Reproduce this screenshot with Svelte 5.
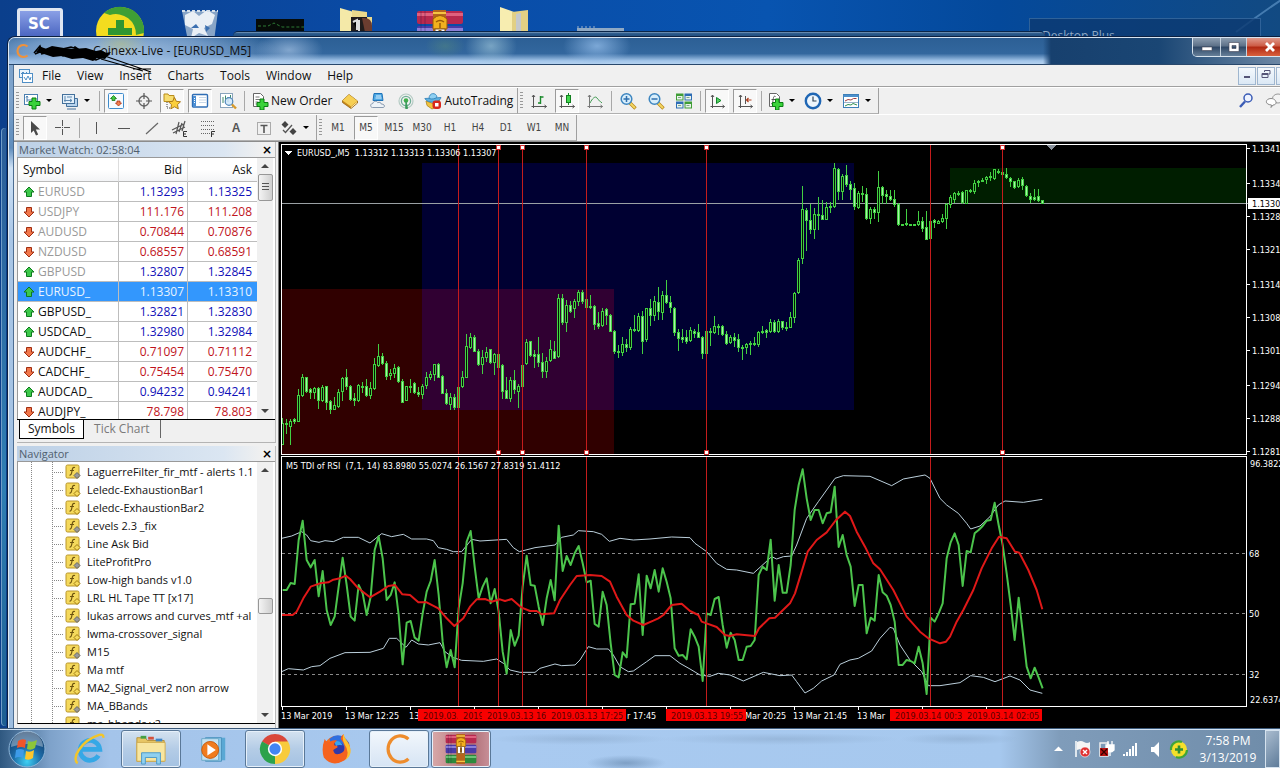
<script lang="ts">
  type Quote = { symbol: string; bid: string; ask: string; up: boolean; dim?: boolean; selected?: boolean };

  const menus = ["File", "View", "Insert", "Charts", "Tools", "Window", "Help"];
  const timeframes = ["M1", "M5", "M15", "M30", "H1", "H4", "D1", "W1", "MN"];

  const quotes: Quote[] = [
    { symbol: "EURUSD", bid: "1.13293", ask: "1.13325", up: true, dim: true },
    { symbol: "USDJPY", bid: "111.176", ask: "111.208", up: false, dim: true },
    { symbol: "AUDUSD", bid: "0.70844", ask: "0.70876", up: false, dim: true },
    { symbol: "NZDUSD", bid: "0.68557", ask: "0.68591", up: false, dim: true },
    { symbol: "GBPUSD", bid: "1.32807", ask: "1.32845", up: true, dim: true },
    { symbol: "EURUSD_", bid: "1.13307", ask: "1.13310", up: true, selected: true },
    { symbol: "GBPUSD_", bid: "1.32821", ask: "1.32830", up: true },
    { symbol: "USDCAD_", bid: "1.32980", ask: "1.32984", up: true },
    { symbol: "AUDCHF_", bid: "0.71097", ask: "0.71112", up: false },
    { symbol: "CADCHF_", bid: "0.75454", ask: "0.75470", up: false },
    { symbol: "AUDCAD_", bid: "0.94232", ask: "0.94241", up: true },
    { symbol: "AUDJPY_", bid: "78.798", ask: "78.803", up: false },
  ];

  // locked = compiled only, grey diamond
  const indicators = [
    { name: "LaguerreFilter_fir_mtf - alerts 1.1", locked: true },
    { name: "Leledc-ExhaustionBar1", locked: false },
    { name: "Leledc-ExhaustionBar2", locked: false },
    { name: "Levels 2.3 _fix", locked: true },
    { name: "Line Ask Bid", locked: false },
    { name: "LiteProfitPro", locked: true },
    { name: "Low-high bands v1.0", locked: false },
    { name: "LRL HL Tape TT [x17]", locked: false },
    { name: "lukas arrows and curves_mtf +al", locked: true },
    { name: "lwma-crossover_signal", locked: false },
    { name: "M15", locked: true },
    { name: "Ma mtf", locked: false },
    { name: "MA2_Signal_ver2 non arrow", locked: false },
    { name: "MA_BBands", locked: true },
    { name: "ma_bbands v2", locked: false },
  ];

  // high, body top, body bottom, low, 1 = bullish
  const candles = [
    [418,423,444,444,1],[419,423,424,433,1],[419,421,426,444,1],[418,419,421,423,0],[389,395,421,421,1],[374,377,395,396,1],
    [377,377,391,392,0],[388,389,392,398,0],[387,388,392,398,1],[387,388,400,408,0],[385,387,400,401,1],[386,386,402,409,0],
    [400,401,409,413,0],[397,405,409,409,1],[389,392,406,407,1],[377,378,391,400,1],[369,377,386,389,0],[385,386,399,400,0],
    [393,398,400,405,0],[384,385,400,401,1],[382,386,387,392,0],[379,386,395,396,0],[382,388,395,398,1],[358,364,388,389,1],
    [344,356,365,366,1],[353,356,363,364,0],[361,363,376,379,0],[369,373,375,379,1],[364,368,373,377,1],[366,367,381,382,0],
    [379,381,402,402,0],[386,386,400,400,1],[379,386,387,392,0],[382,383,392,393,0],[387,392,394,396,0],[384,386,394,398,1],
    [372,377,385,388,1],[371,374,377,379,1],[364,364,374,380,1],[363,364,377,377,0],[375,376,393,393,0],[389,393,403,404,0],
    [393,397,404,409,1],[394,397,407,409,0],[386,387,407,407,1],[371,377,386,387,1],[334,346,377,377,1],[333,337,347,348,1],
    [335,337,351,351,0],[349,351,364,365,0],[350,357,364,373,1],[347,352,357,361,1],[349,349,362,363,0],[353,354,362,374,1],
    [353,354,367,368,0],[364,365,391,398,0],[377,390,398,398,0],[377,380,398,401,1],[370,380,389,393,0],[384,386,391,407,1],
    [364,365,386,387,1],[339,342,363,364,1],[341,341,355,356,0],[350,354,356,367,0],[337,354,362,366,0],[353,362,371,377,0],
    [357,361,371,377,1],[340,349,360,361,1],[341,351,358,358,0],[294,298,356,357,1],[294,298,322,324,0],[300,305,322,331,1],
    [301,305,311,312,0],[299,301,308,317,1],[290,292,301,305,1],[290,292,301,303,0],[299,299,307,308,0],[295,306,307,308,0],
    [305,306,324,329,0],[312,323,326,328,0],[308,311,325,326,1],[308,309,315,324,0],[314,315,331,331,0],[330,331,351,353,0],
    [345,351,352,357,0],[337,344,352,355,1],[339,344,347,351,0],[327,329,347,349,1],[315,329,330,331,0],[313,316,330,331,1],
    [311,316,341,353,0],[308,308,339,341,1],[299,308,315,325,0],[296,301,315,320,1],[287,302,311,319,0],[291,295,312,319,1],
    [280,295,302,303,0],[296,302,307,312,0],[307,308,332,335,0],[329,332,338,350,0],[329,337,339,342,0],[330,337,341,343,0],
    [327,330,340,341,1],[329,331,333,337,0],[324,332,337,337,0],[336,337,353,358,0],[331,331,353,354,1],[328,331,332,345,0],
    [316,326,332,333,1],[324,326,327,334,0],[325,326,334,335,0],[331,334,343,344,0],[335,337,342,343,1],[333,337,340,346,0],
    [334,339,347,351,0],[345,347,348,359,0],[343,344,347,353,1],[341,343,344,354,0],[337,343,344,345,0],[331,332,344,346,1],
    [326,331,332,333,1],[329,330,332,337,0],[319,322,331,332,1],[320,322,331,332,0],[319,321,331,332,1],[321,321,327,329,0],
    [322,327,328,330,0],[312,317,327,327,1],[292,293,317,322,1],[258,260,292,293,1],[186,209,258,263,1],[208,210,220,250,0],
    [204,220,229,233,0],[208,214,229,238,1],[197,214,215,229,0],[200,215,219,219,0],[202,207,219,219,1],[202,206,207,212,0],
    [163,168,206,207,1],[168,169,191,199,0],[174,176,191,199,1],[165,175,184,186,0],[181,184,189,199,0],[183,188,206,209,0],
    [191,193,207,208,1],[186,193,194,201,0],[188,194,218,219,0],[207,209,218,223,1],[207,209,212,218,0],[171,187,212,221,1],
    [186,187,195,203,0],[190,194,196,203,0],[190,196,199,200,0],[190,199,204,206,0],[203,204,224,225,0],[224,224,225,225,0],
    [209,223,224,225,0],[224,224,225,225,0],[224,224,225,225,0],[211,221,224,225,1],[217,221,228,231,0],[211,227,239,239,0],
    [221,221,238,238,1],[219,220,222,227,0],[220,221,223,223,1],[214,218,221,222,1],[203,204,218,228,1],[195,197,204,207,1],
    [192,193,199,202,1],[191,193,194,195,0],[191,192,202,203,0],[190,190,203,203,1],[189,190,191,192,0],[180,183,191,193,1],
    [180,181,182,186,0],[178,180,181,181,0],[176,177,179,183,1],[172,176,177,180,0],[169,169,178,179,1],[169,171,172,173,0],
    [172,172,174,175,0],[168,174,177,178,0],[177,178,181,186,0],[181,181,187,188,0],[178,180,186,187,1],[177,179,185,189,0],
    [185,186,195,196,0],[193,196,199,202,0],[189,197,199,200,0],[189,196,200,201,0],[200,200,203,203,0],
  ];

  // indicator pane runs on its own grid, three units to the pixel
  const rsi = [
    405,405,384,387,255,197,315,337,315,424,348,465,510,485,395,308,390,485,497,390,415,480,425,285,244,310,435,420,382,480,
    628,503,498,548,557,475,410,378,315,420,560,637,585,637,460,385,260,228,335,430,395,370,445,402,470,590,656,525,572,542,
    395,302,390,392,455,510,430,375,436,212,348,303,330,295,273,325,382,377,507,515,410,450,565,660,667,592,607,448,446,358,
    540,362,400,345,410,340,380,430,580,602,600,613,523,545,575,678,475,480,432,426,510,578,533,555,615,615,575,573,555,360,
    335,345,254,437,330,413,413,330,165,90,43,130,195,165,165,205,175,172,95,276,240,300,335,453,390,390,535,488,497,360,
    412,422,450,500,630,630,615,618,625,575,625,717,488,500,475,445,310,262,235,270,393,288,292,235,225,213,197,195,143,210,
    270,355,450,555,428,530,635,670,638,668,700,
  ];
  const rsiPoints = rsi.map((y, i) => `${8 + i * 12},${y}`).join(" ");
  const signal =
    "5,480 38,480 50,470 70,430 92,395 120,385 145,382 160,374 180,370 197,362 210,372 235,400 270,427 300,410 325,393 345,390 367,418 390,420 415,442 440,442 475,460 500,490 523,513 550,490 570,455 590,433 615,432 635,440 660,433 675,438 695,432 725,458 750,468 770,468 785,478 822,475 840,435 870,390 890,363 930,360 965,363 990,380 1010,425 1040,480 1060,497 1090,510 1120,497 1135,490 1150,480 1175,450 1205,446 1230,468 1255,480 1265,500 1310,516 1335,540 1350,543 1370,538 1425,543 1437,520 1468,490 1485,488 1530,445 1545,415 1565,350 1583,290 1610,255 1640,232 1668,195 1695,170 1710,183 1730,230 1755,275 1780,325 1800,343 1840,405 1880,485 1920,530 1945,550 1980,565 1998,560 2010,545 2030,500 2050,465 2080,405 2105,340 2135,280 2157,245 2180,250 2205,290 2218,293 2245,345 2270,405 2287,463";
  const upper =
    "5,250 35,243 65,230 80,240 92,257 117,262 135,257 160,260 190,247 235,247 270,264 305,236 335,245 370,238 395,252 440,252 460,257 475,278 500,283 520,290 545,290 575,253 600,258 680,253 700,278 718,290 765,278 825,270 845,247 880,240 895,227 940,230 965,238 988,259 1020,250 1060,255 1110,252 1175,246 1230,248 1245,265 1280,290 1310,325 1340,343 1370,345 1420,355 1440,337 1475,305 1490,312 1510,305 1535,303 1550,270 1580,190 1615,140 1640,105 1665,70 1690,62 1770,64 1835,92 1870,72 1935,60 1950,70 1965,100 1980,130 2000,150 2035,175 2060,205 2072,222 2100,213 2130,185 2155,150 2175,138 2230,142 2287,133";
  const lower =
    "5,650 25,641 70,645 95,635 120,632 150,610 195,593 270,592 310,580 328,550 350,550 378,577 395,555 415,567 445,570 480,563 495,590 520,608 545,616 610,619 650,612 670,625 690,645 720,652 765,652 780,640 825,627 845,632 885,630 900,615 925,575 950,582 985,582 1000,600 1020,635 1045,650 1060,648 1100,620 1125,602 1170,602 1200,625 1230,642 1260,660 1290,664 1315,655 1350,660 1390,678 1450,652 1500,662 1535,660 1550,680 1575,714 1600,700 1625,678 1662,660 1680,628 1710,615 1735,610 1775,588 1800,550 1830,517 1840,520 1860,570 1890,615 1925,650 1945,692 1980,692 2040,683 2072,662 2110,667 2145,680 2190,663 2220,675 2250,705 2287,715";

  const prices: [number, string][] = [
    [148, "1.1341"], [183, "1.1334"], [216, "1.1328"], [249, "1.1321"], [284, "1.1314"],
    [317, "1.1308"], [350, "1.1301"], [385, "1.1294"], [418, "1.1288"], [451, "1.1281"],
  ];
  const levels: [number, string][] = [[553, "68"], [613, "50"], [674, "32"]];
  // labels next to a red stamp keep only the part that stays free
  const times: [number, string][] = [
    [281, "13 Mar 2019"], [345, "13 Mar 12:25"], [409, "13"], [627, "r 17:45"],
    [745, "Mar 20:25"], [793, "13 Mar 21:45"], [857, "13 Mar"],
  ];
  const ticks = Array.from({ length: 12 }, (_, i) => 282 + i * 64);
  const marks = [
    { x: 458, label: "2019.03.", grip: false },
    { x: 498, label: "2019", grip: true },
    { x: 522, label: "2019.03.13 16", grip: true },
    { x: 586, label: "2019.03.13 17:25", grip: true },
    { x: 706, label: "2019.03.13 19:55", grip: true },
    { x: 930, label: "2019.03.14 00:3", grip: false },
    { x: 1002, label: "2019.03.14 02:05", grip: true },
  ];

  let timeframe = $state("M5");
  let tab = $state("Symbols");
</script>

{#snippet icon(name: string)}
  <svg class="ic" viewBox="0 0 18 18" aria-hidden="true">
    {#if name === "newchart"}
      <rect x="1.5" y="2.5" width="13" height="10" fill="#fff" stroke="#4a7fb0" />
      <path d="M4 4v6M3 5.500l1-1.500 1 1.500M4 8h5" fill="none" stroke="#4a7fb0" />
      <path d="M9 6h4v3.500h4v4h-4V17H9v-3.500H6v-4h3z" fill="#3ad23a" stroke="#0a7d12" />
    {:else if name === "profiles"}
      <path d="M5.500 6.500h11v8h-11z" fill="#b8d4ee" stroke="#44719c" />
      <path d="M6 17h9" stroke="#44719c" />
      <rect x="1.500" y="2.500" width="12" height="9" fill="#e4f0fa" stroke="#44719c" />
      <path d="M4 4v6M3 8.500h8M9 7l2 1.500L9 10M6 5h5" fill="none" stroke="#5d88b0" />
    {:else if name === "watch"}
      <rect x="1.500" y="1.500" width="15" height="15" rx="1" fill="#f6fbff" stroke="#3f8ccc" />
      <path d="M6.500 3.500l3 3H8v2H5v-2H3.500z" fill="#43c843" stroke="#157a15" stroke-width=".8" />
      <path d="M11.500 14l3-3H13V9h-3v2H8.500z" fill="#f08050" stroke="#b03010" stroke-width=".8" />
    {:else if name === "target"}
      <circle cx="9" cy="9" r="5" fill="none" stroke="#666" stroke-width="1.300" />
      <path d="M9 1v6M9 11v6M1 9h6M11 9h6" stroke="#555" stroke-width="1.200" />
    {:else if name === "star"}
      <path d="M1 4V2h4l1 1.500h5v6H1z" fill="#f7dd6f" stroke="#b98d1c" />
      <path d="M4 10v6h5" fill="none" stroke="#444" stroke-dasharray="1 1" />
      <path d="M11.500 5.500l1.800 3.800 4.200.5-3 2.800.8 4.200-3.800-2-3.700 2 .7-4.200-3-2.800 4.200-.5z" fill="#fbcf3c" stroke="#a5700f" stroke-width=".9" />
    {:else if name === "terminal"}
      <rect x="1.500" y="2.500" width="15" height="12.500" rx="1" fill="#fff" stroke="#2f6eb5" stroke-width="1.400" />
      <path d="M2 4h3v10.500H2z" fill="#4a8ed4" /><path d="M3.500 6v6" stroke="#fff" stroke-dasharray="1 1" />
      <path d="M8 5.500h7M8 8h7M8 10.500h7" stroke="#c8d8e8" />
    {:else if name === "tester"}
      <rect x="1.500" y="1.500" width="12" height="14" fill="#fff" stroke="#8aa4bc" />
      <path d="M4 5v6M6.500 3.500v5M9 5v5M11.500 3v4" stroke="#3f8a6a" />
      <circle cx="10" cy="9.500" r="3.800" fill="#cfe6fa" fill-opacity=".85" stroke="#4f86b8" stroke-width="1.200" />
      <path d="M13 12.500l4 4" stroke="#d79a2b" stroke-width="2.400" />
    {:else if name === "order"}
      <path d="M2.500 1.500h7l3 3v10h-10z" fill="#fff" stroke="#666" />
      <path d="M4.500 5h4M4.500 7.500h6M4.500 10h3M4.500 12h3" stroke="#777" />
      <path d="M9 7h4v3.500h4v4h-4V18H9v-3.500H6v-4h3z" fill="#3ad23a" stroke="#0a7d12" />
    {:else if name === "book"}
      <path d="M1.500 8.500L8 2.500l8.500 6.500v2L10 16.500 1.500 10.500z" fill="#c98a1a" stroke="#94620c" stroke-width=".8" />
      <path d="M1.500 8.500L8 2.500l8.500 6.500-6.500 5.500z" fill="#f6cf54" />
      <path d="M10 15.500l6-5" stroke="#fff0b8" />
    {:else if name === "mql"}
      <path d="M5 1.500h8l1 7H4z" fill="#4fa9e4" stroke="#1f73b8" /><path d="M7 4h5M6.500 6h6" stroke="#dff1ff" />
      <path d="M3.500 15.500c-2.500 0-2.500-4 .3-4 .5-2.500 4-3 5-.8 1.500-1 3.400-.2 3.400 1.300 4 0 4 3.500 1.800 3.500z" fill="#eef3f8" stroke="#8a9bb0" />
    {:else if name === "signals"}
      <circle cx="9" cy="9" r="7" fill="none" stroke="#b5cbc4" stroke-width="1.200" />
      <circle cx="9" cy="9" r="4.600" fill="none" stroke="#6fae96" stroke-width="1.300" />
      <circle cx="9" cy="8.500" r="2.300" fill="#41b04b" /><path d="M9 9l1.500 7.500h-1.800z" fill="#3b9a5a" stroke="#3b9a5a" />
    {:else if name === "auto"}
      <path d="M2 9l7 2.500L15.500 8 14 14l-6 3-5-3.500z" fill="#f0c33f" stroke="#b1841a" stroke-width=".8" />
      <path d="M.8 6.500C2 9 6 10.500 9.500 10.200 13 10 16.500 8 17 5.500z" fill="#5fb1e0" stroke="#2d7fb6" stroke-width=".8" />
      <path d="M5 6.500c0-6 7-6.500 8-1.500-2 2-5 2.500-8 1.500z" fill="#8fd0f2" stroke="#2d7fb6" stroke-width=".8" />
      <rect x="8.500" y="8.500" width="8.500" height="8.500" rx="3" fill="#d8281c" /><rect x="11" y="11" width="3.500" height="3.500" fill="#fff" />
    {:else if name === "bars"}
      <path d="M3.500 3v13M1.500 14.500h15M2 5l1.500-2L5 5M14.500 13l2 1.500-2 1.500" fill="none" stroke="#555" />
      <path d="M10.500 4v8M10.500 5h3M8 11h2.500" fill="none" stroke="#1b8a2c" stroke-width="1.400" />
    {:else if name === "candle"}
      <path d="M3.500 3v13M1.500 14.500h15M2 5l1.500-2L5 5M14.500 13l2 1.500-2 1.500" fill="none" stroke="#555" />
      <path d="M10.500 1v12" stroke="#1b8a2c" /><rect x="8.500" y="3.500" width="4" height="7" fill="#42d64e" stroke="#128020" />
    {:else if name === "line"}
      <path d="M3.500 3v13M1.500 14.500h15M2 5l1.500-2L5 5M14.500 13l2 1.500-2 1.500" fill="none" stroke="#777" />
      <path d="M4 11c3-6 6-7 7-5s3 3 5 5" fill="none" stroke="#3f9a50" />
    {:else if name === "zoomin" || name === "zoomout"}
      <path d="M11 11l5.500 5.500" stroke="#b98a1d" stroke-width="3.400" /><path d="M11 11l5 5" stroke="#f4d763" stroke-width="1.800" />
      <circle cx="7.500" cy="7" r="5.300" fill="#d8eefb" stroke="#3e86c0" stroke-width="1.500" />
      <path d="M4.500 7h6" stroke="#2f6fae" stroke-width="1.500" />
      {#if name === "zoomin"}<path d="M7.500 4v6" stroke="#2f6fae" stroke-width="1.500" />{/if}
    {:else if name === "tile"}
      <path d="M1 1.500h7.500v7H1zM9.500 9.500H17v7H9.500z" fill="#3f9d36" /><path d="M9.500 1.500H17v7H9.500zM1 9.500h7.500v7H1z" fill="#2d6cb4" />
      <path d="M2 4h5.500v3.500H2zM10.500 4H16v3.500h-5.500zM2 12h5.500v3.500H2zM10.500 12H16v3.500h-5.500z" fill="#e9f3ea" />
      <path d="M3 5.500h3M11.500 5.500h3M3 13.500h3M11.500 13.500h3" stroke="#7fa58a" />
    {:else if name === "scroll"}
      <path d="M4.500 3v13M2.500 14.500h14M3 5l1.500-2L6 5M14.500 13l2 1.500-2 1.500" fill="none" stroke="#555" />
      <path d="M8.500 5.500l4.500 3-4.500 3z" fill="#54d060" stroke="#12852a" />
    {:else if name === "shift"}
      <path d="M4.500 3v13M2.500 14.500h14M3 5l1.500-2L6 5M14.500 13l2 1.500-2 1.500" fill="none" stroke="#555" />
      <path d="M9.500 4v8" stroke="#555" /><path d="M10.500 8h5M12.500 6l-2 2 2 2" fill="none" stroke="#b04020" stroke-width="1.200" />
    {:else if name === "indicator"}
      <path d="M3.500 1.500h7l3 3v10h-10z" fill="#fff" stroke="#666" /><path d="M9.500 4.500c-2-1-2 1-2.500 4s-1 3.500-2 3M5.500 7.500h4" fill="none" stroke="#555" />
      <path d="M9.500 7h3.500v3.500h4v4h-4V18H9.500v-3.500h-3v-4h3z" fill="#3ad23a" stroke="#0a7d12" />
    {:else if name === "clock"}
      <circle cx="9" cy="9" r="7.200" fill="#eef6fd" stroke="#1f66b4" stroke-width="2.400" />
      <path d="M9 4.500V9h3.500" fill="none" stroke="#345" stroke-width="1.200" />
    {:else if name === "template"}
      <rect x="1.500" y="2.500" width="15" height="13" fill="#fff" stroke="#3c7fb8" /><path d="M1.500 3h15v2h-15z" fill="#4c90cc" />
      <path d="M3 9l3-1.500 3 .5 2.500-1.500h3" fill="none" stroke="#a03c3c" /><path d="M2 10.500h14" stroke="#9bb4c8" /><path d="M3 14l3-1.500 3 .5 2-1.500 4 1.500" fill="none" stroke="#2f8f4f" />
    {:else if name === "cursor"}
      <path d="M5 2l9 8.500H9.800l2.400 5-2.200 1-2.300-5L5 14z" fill="#4a4a4a" />
    {:else if name === "cross"}
      <path d="M8.500 1v6M8.500 10v6M1 8.500h6M10 8.500h6" stroke="#555" /><path d="M8 8h1v1H8z" fill="#555" />
    {:else if name === "vline"}
      <path d="M9.500 3v12" stroke="#555" />
    {:else if name === "hline"}
      <path d="M3 9.500h12" stroke="#555" />
    {:else if name === "trend"}
      <path d="M3 15L15 4" stroke="#666" stroke-width="1.200" />
    {:else if name === "channel"}
      <path d="M1 11L13 5M2 14l12-6M5 15L8 3M8 13l3-9M11 12l3-10" stroke="#555" stroke-width="1.200" />
      <path d="M16 12.500h-3.500v5H16M12.500 15H15" fill="none" stroke="#333" />
    {:else if name === "fib"}
      <path d="M2 2.500h14M2 6.500h14M2 10.500h14M2 14.500h9" stroke="#666" stroke-dasharray="1 1" />
      <path d="M16 12.500h-3.500V18M12.500 15H15" fill="none" stroke="#333" />
    {:else if name === "label"}
      <rect x="2.500" y="3.500" width="13" height="12" fill="none" stroke="#666" stroke-dasharray="1 1" />
      <path d="M5.500 6.500h7M9 6v8" stroke="#555" stroke-width="1.600" />
    {:else if name === "shapes"}
      <path d="M5 2l3.500 3.500L5 9 1.500 5.500zM13 9l3.500 3.500L13 16l-3.500-3.500z" fill="#444" /><path d="M3 11l2.500 2.500L12 6" fill="none" stroke="#555" stroke-width="1.300" />
    {:else if name === "search"}
      <circle cx="11" cy="6" r="4" fill="#eef3ff" stroke="#3a5bb5" stroke-width="1.500" /><path d="M8 9.500L3 15" stroke="#3a5bb5" stroke-width="2.400" />
    {:else if name === "chat"}
      <ellipse cx="13" cy="6.500" rx="5.500" ry="4.500" fill="#f4f4f4" stroke="#999" /><path d="M6 15.500l.5-2.500C-1 12.500.5 6.500 6 6.500s7 6.500 2 6.500z" fill="#fff" stroke="#888" />
    {/if}
  </svg>
{/snippet}

{#snippet tool(name: string, label: string, pressed = false)}
  <button class="tool" class:pressed aria-label={label}>{@render icon(name)}</button>
{/snippet}

{#snippet dropTool(name: string, label: string)}
  <button class="tool drop" aria-label={label}>{@render icon(name)}<i class="caret"></i></button>
{/snippet}

{#snippet winrar()}
  <rect x="1" y="2" width="46" height="13" rx="2" fill="#b8294f" /><rect x="1" y="4" width="46" height="3" fill="#e0607e" />
  <rect x="1" y="17" width="46" height="13" rx="2" fill="#4a3aa8" /><rect x="1" y="19" width="46" height="3" fill="#8a7fd8" />
  <rect x="1" y="32" width="46" height="13" rx="2" fill="#2c8a3c" /><rect x="1" y="34" width="46" height="3" fill="#6cc276" />
  <path d="M5 2v43M9 2v43" stroke="#2a1a40" stroke-opacity=".35" />
  <rect x="17" y="1" width="13" height="45" fill="#b5651d" /><path d="M17 4h13M17 42h13" stroke="#f5c542" stroke-width="2" />
  <path d="M17 10q7-7 14 0v10H17z" fill="#f2b01e" stroke="#9a5b08" /><path d="M20 13q4-3 8 0M24 14v5" fill="none" stroke="#9a5b08" stroke-width="1.500" />
  <rect x="19" y="20" width="10" height="10" fill="#fff" stroke="#8a5a1a" /><path d="M24 21v8" stroke="#8a5a1a" stroke-width="3" />
{/snippet}

<div class="screen">
  <div class="desktop">
    <svg class="shortcuts" aria-hidden="true">
      <defs>
        <linearGradient id="sc" x1="0" y1="0" x2="0" y2="1"><stop offset="0" stop-color="#8aa0e6" /><stop offset="1" stop-color="#3552b4" /></linearGradient>
      </defs>
      <path d="M1236 32Q1260 14 1284 -2" fill="none" stroke="#5b92c4" stroke-width="2" opacity=".7" />
      <rect x="17" y="8" width="46" height="40" rx="3" fill="#dfe6f2" /><rect x="20" y="11" width="40" height="34" fill="url(#sc)" />
      <circle cx="120" cy="31" r="24" fill="#f3dc1f" /><path d="M104 13a24 24 0 0 1 40 20l-8 2a20 20 0 0 0-26-20z" fill="#3f9f35" />
      <path d="M116 20h8v8h8v7h-24v-7h8z" fill="#2f9632" />
      <path d="M182 11h36l-4 30h-26z" fill="#9fb6cf" opacity=".85" /><path d="M185 15l8-4 6 5 8-6 8 5-3 9-8 4 4 8-9-3-8 5 2-9-8-4z" fill="#e9eff5" /><path d="M191 28l5-4 3 4zM205 25l5 3-4 4z" fill="#3a6fb0" />
      <path d="M182 11h36" stroke="#d5e0ea" stroke-width="2" stroke-dasharray="3 2" />
      <rect x="256" y="19" width="48" height="14" fill="#060b08" /><path d="M258 26h10l6-3 8 4h22" fill="none" stroke="#2c7a34" stroke-dasharray="3 2" />
      <path d="M340 8l14 4v24h-14z" fill="#f4e9a8" /><path d="M352 10l15 2v5h5v20h-20z" fill="#ead98c" /><path d="M351 17h16v20h-16z" fill="#201c1c" /><path d="M353 22l4-2v10M359 20v12" stroke="#ddd" stroke-width="2" /><path d="M362 18q10-1 10 8v11h-6z" fill="#6b3d30" />
      <g transform="translate(416 9)">{@render winrar()}</g>
      <path d="M500 7l14 5v24h-14z" fill="#f7edb0" /><path d="M512 12l16-2v27h-16z" fill="#e2d084" /><path d="M516 14l5-1v22h-5z" fill="#c5c9cc" />
      <rect x="577" y="28" width="47" height="10" fill="#8fa9c4" /><path d="M577 27h20" stroke="#9fb3c9" stroke-dasharray="2 2" />
    </svg>
    <span class="sc">SC</span>
    <div class="gadget"><span>Desktop Plus</span><i>⌄</i></div>
    <div class="behind"></div>
    <div class="behind-left"></div>

    <main class="window">
      <header class="title">
        <svg class="logo" viewBox="0 0 14 16" aria-hidden="true"><path d="M12.500 3.500A6 6 0 1 0 12.500 12.500" fill="none" stroke="#f0923a" stroke-width="2.200" /></svg>
        <h1>Coinexx-Live - [EURUSD_M5]</h1>
        <div class="wbtns">
          <button class="wb" aria-label="Minimize"><svg viewBox="0 0 12 12"><rect x="1" y="6" width="10" height="3.500" fill="#fff" stroke="#445" stroke-width=".6" /></svg></button>
          <button class="wb" aria-label="Restore"><svg viewBox="0 0 12 12"><path d="M1 1.500h10v9H1zM4 4.500v3h4v-3z" fill="#fff" fill-rule="evenodd" stroke="#445" stroke-width=".6" /></svg></button>
          <button class="wb close" aria-label="Close"><svg viewBox="0 0 12 12"><path d="M2 2l8 8M10 2l-8 8" stroke="#fff" stroke-width="2.800" /></svg></button>
        </div>
        <svg class="scribble" aria-hidden="true">
          <path d="M3 8l4-5 5 2 7-3 12 2 10 1 12-1 10 3 5-1 4 3 6-1-6 7-8-1-4 3-10-3-11 1-10-3-9 1-9-3z" fill="#000" />
          <path d="M1 9l6-7 2 5-7 3M6 3l24 9 12-9 18 12 10-7 5 3-12 5-30-8M8 10l30-7 30 10" fill="none" stroke="#000" stroke-width="1.500" />
          <path d="M66 10l52 18M68 15l42 12M100 25h18" fill="none" stroke="#000" stroke-width="1.200" />
        </svg>
      </header>

      <div class="client">
        <nav class="menu">
          <svg class="mdi" viewBox="0 0 16 16" aria-hidden="true">
            <rect x="1.500" y="1.500" width="10" height="8" fill="#eaf4fc" stroke="#4f8fc6" /><path d="M3 6l2-2 2 2 2-2" fill="none" stroke="#4f8fc6" />
            <rect x="4.500" y="5.500" width="10" height="9" fill="#fff" stroke="#4f8fc6" /><path d="M6 9l2 3 2-4 2 4 1-3" fill="none" stroke="#4f8fc6" />
          </svg>
          {#each menus as m (m)}<button>{m}</button>{/each}
          <div class="mdibtns">
            <button aria-label="Minimize chart"><svg viewBox="0 0 12 12"><path d="M3 9h6" stroke="#557" stroke-width="2" /></svg></button>
            <button aria-label="Restore chart"><svg viewBox="0 0 12 12"><path d="M4.500 4V2.500H10V6H8.500M2 5.500h6v4H2zM2 6.500h6" fill="none" stroke="#557" /></svg></button>
            <button aria-label="Close chart"><svg viewBox="0 0 12 12"><path d="M3 3l6 6M9 3l-6 6" stroke="#557" stroke-width="1.500" /></svg></button>
          </div>
        </nav>

        <div class="bar">
          <div class="grp">
            <i class="grip"></i>
            {@render dropTool("newchart", "New chart")}
            {@render dropTool("profiles", "Profiles")}
            <i class="sep"></i>
            {@render tool("watch", "Market Watch", true)}
            {@render tool("target", "Data Window")}
            {@render tool("star", "Navigator", true)}
            {@render tool("terminal", "Terminal", true)}
            {@render tool("tester", "Strategy Tester")}
            <i class="sep"></i>
            <button class="tool wide">{@render icon("order")}New Order</button>
            {@render tool("book", "MetaEditor")}
            {@render tool("mql", "Community")}
            {@render tool("signals", "Signals")}
            <button class="tool wide">{@render icon("auto")}AutoTrading</button>
          </div>
          <div class="grp">
            <i class="grip"></i>
            {@render tool("bars", "Bar chart")}
            {@render tool("candle", "Candlesticks", true)}
            {@render tool("line", "Line chart")}
            <i class="sep"></i>
            {@render tool("zoomin", "Zoom in")}
            {@render tool("zoomout", "Zoom out")}
            {@render tool("tile", "Tile windows")}
            <i class="sep"></i>
            {@render tool("scroll", "Auto scroll", true)}
            {@render tool("shift", "Chart shift", true)}
            <i class="sep"></i>
            {@render dropTool("indicator", "Indicators")}
            {@render dropTool("clock", "Periods")}
            {@render dropTool("template", "Templates")}
          </div>
          <div class="right">
            {@render tool("search", "Search")}
            {@render tool("chat", "Chat")}
          </div>
        </div>

        <div class="bar">
          <div class="grp">
            <i class="grip"></i>
            {@render tool("cursor", "Cursor", true)}
            {@render tool("cross", "Crosshair")}
            <i class="sep"></i>
            {@render tool("vline", "Vertical line")}
            {@render tool("hline", "Horizontal line")}
            {@render tool("trend", "Trendline")}
            {@render tool("channel", "Channel")}
            {@render tool("fib", "Fibonacci")}
            <button class="tool letter">A</button>
            {@render tool("label", "Text label")}
            {@render dropTool("shapes", "Arrows")}
          </div>
          <div class="grp">
            <i class="grip"></i>
            {#each timeframes as tf (tf)}
              <button class="tool tf" class:pressed={timeframe === tf} onclick={() => (timeframe = tf)}>{tf}</button>
            {/each}
          </div>
        </div>

        <div class="work">
          <aside class="dock">
            <section class="panel watch">
              <div class="cap"><h2>Market Watch: 02:58:04</h2><button aria-label="Close Market Watch">×</button></div>
              <div class="body">
                <div class="scroller">
                  <table>
                    <thead><tr><th>Symbol</th><th class="num">Bid</th><th class="num">Ask</th></tr></thead>
                    <tbody>
                      {#each quotes as q (q.symbol)}
                        <tr class:up={q.up} class:dim={q.dim} class:selected={q.selected}>
                          <td>
                            <svg viewBox="0 0 12 12" aria-hidden="true">
                              {#if q.up}<path d="M6 1l5 5H8.500v4.500h-5V6H1z" fill="#3cc84a" stroke="#0f7a1e" />
                              {:else}<path d="M6 11L1 6h2.500V1.500h5V6H11z" fill="#f0764a" stroke="#a02c10" />{/if}
                            </svg>{q.symbol}
                          </td>
                          <td class="num">{q.bid}</td>
                          <td class="num">{q.ask}</td>
                        </tr>
                      {/each}
                    </tbody>
                  </table>
                </div>
                <div class="sbar"><i class="arr up"></i><i class="thumb"></i><i class="arr down"></i></div>
              </div>
              <div class="tabs">
                {#each ["Symbols", "Tick Chart"] as t (t)}
                  <button class:on={tab === t} onclick={() => (tab = t)}>{t}</button>
                {/each}
              </div>
            </section>

            <section class="panel nav">
              <div class="cap"><h2>Navigator</h2><button aria-label="Close Navigator">×</button></div>
              <div class="body">
                <ul class="scroller">
                  {#each indicators as ind (ind.name)}
                    <li>
                      <svg viewBox="0 0 16 16" aria-hidden="true">
                        <rect x="1" y="1" width="13" height="13" rx="1.500" fill="#f5d95c" stroke="#b8952a" />
                        <path d="M10 3.500c-2-.8-2.500.5-3 3.500s-1 4.500-2.500 4M5 6.500h4" fill="none" stroke="#6e5410" stroke-width="1.200" />
                        <path d="M12 8.500l3 3-3 3-3-3z" fill={ind.locked ? "#999" : "#f5d95c"} stroke={ind.locked ? "#666" : "#a07c12"} />
                      </svg>
                      <span>{ind.name}</span>
                    </li>
                  {/each}
                </ul>
                <div class="sbar"><i class="arr up"></i><i class="thumb"></i><i class="arr down"></i></div>
              </div>
            </section>
          </aside>

          <div class="chart">
            <svg role="img" aria-label="EURUSD M5 chart">
              <g transform="translate(-279 -142)" shape-rendering="crispEdges">
                <rect x="282" y="289" width="332" height="165" fill="#300000" />
                <rect x="422" y="163" width="432" height="247" fill="#000032" />
                <rect x="422" y="289" width="192" height="121" fill="#300032" />
                <rect x="950" y="168" width="296" height="36" fill="#001e00" />
                <rect x="282" y="203" width="966" height="1" fill="#9aa0a4" />
                {#each candles as [high, top, bottom, low, bull], i (i)}
                  {@const x = 282 + i * 4}
                  <rect {x} y={high} width="1" height={low - high + 1} fill="#42d042" />
                  <rect x={x - 1} y={top} width="3" height={bottom - top + 1} fill="#42d042" />
                  {#if bottom - top > 1}
                    <rect {x} y={top + 1} width="1" height={bottom - top - 1} fill={bull ? "#021602" : "#a8f4a8"} />
                  {/if}
                {/each}
                {#each levels as [y] (y)}
                  <path d="M282 {y}.5H1246" stroke="#8a8a8a" stroke-dasharray="3 3" />
                {/each}
                <g transform="translate(280 455) scale(.33333)" fill="none" shape-rendering="auto">
                  <polyline points={upper} stroke="#bcd0dc" stroke-width="3" />
                  <polyline points={lower} stroke="#bcd0dc" stroke-width="3" />
                  <polyline points={rsiPoints} stroke="#4cc44c" stroke-width="6" stroke-linejoin="round" />
                  <polyline points={signal} stroke="#e01818" stroke-width="6" stroke-linejoin="round" />
                </g>
                <path d="M281.500 454.500V144.500H1246.500V454.500ZM281.500 706.500V456.500H1246.500V706.500Z" fill="none" stroke="#fff" />
                {#each marks as m (m.x)}
                  <rect x={m.x} y="145" width="1" height="309" fill="#c41c1c" />
                  <rect x={m.x} y="457" width="1" height="249" fill="#c41c1c" />
                  {#if m.grip}
                    <rect x={m.x - 2} y="145" width="5" height="5" fill="#d03030" />
                    <rect x={m.x - 1} y="146" width="3" height="3" fill="#fff" />
                    <rect x={m.x - 2} y="450" width="5" height="5" fill="#d03030" />
                    <rect x={m.x - 1} y="451" width="3" height="3" fill="#fff" />
                  {/if}
                {/each}
                <path d="M285 151h7l-3.500 4z" fill="#fff" />
                <path d="M1046 145h10l-5 5z" fill="#8a929c" />
                <text x="297" y="156">EURUSD_,M5&nbsp; 1.13312 1.13313 1.13306 1.13307</text>
                <text x="286" y="469">M5 TDI of RSI&nbsp; (7,1, 14) 83.8980 55.0274 26.1567 27.8319 51.4112</text>
                {#each prices as [y, label] (y)}
                  <rect x="1247" y={y} width="3" height="1" fill="#fff" />
                  <text x="1252" y={y + 4}>{label}</text>
                {/each}
                <rect x="1248" y="198" width="50" height="11" fill="#fff" />
                <text x="1252" y="207" class="ink">1.1330</text>
                <text x="1250" y="467">96.3822</text>
                {#each levels as [y, label] (y)}<text x="1249" y={y + 4}>{label}</text>{/each}
                <text x="1250" y="703">22.6374</text>
                {#each ticks as x (x)}<rect {x} y="707" width="1" height="3" fill="#fff" />{/each}
                {#each times as [x, label] (x)}<text {x} y="719">{label}</text>{/each}
                {#each marks as m (m.x)}
                  <rect x={m.x - 40} y="709" width="80" height="12" fill="#f80000" />
                  <text x={m.x - 35} y="719" class="stamp">{m.label}</text>
                {/each}
              </g>
            </svg>
          </div>
        </div>
      </div>
    </main>
  </div>

  <footer class="taskbar">
    <button class="start" aria-label="Start">
      <svg viewBox="0 0 38 38">
        <defs><radialGradient id="orb" cx=".5" cy=".85" r=".8"><stop offset="0" stop-color="#3fd0f4" /><stop offset=".5" stop-color="#1c6aa6" /><stop offset="1" stop-color="#123a66" /></radialGradient></defs>
        <circle cx="19" cy="19" r="18" fill="url(#orb)" stroke="#8fb6d8" />
        <path d="M3 17a16 16 0 0 1 32 0q-16-6-32 0z" fill="#fff" opacity=".35" />
        <path d="M10 11q4-3 8-1l-1 8q-4-2-8 0z" fill="#f0562a" /><path d="M20 11q4 2 9-1l-2 8q-4 3-8 1z" fill="#8cc63a" />
        <path d="M8 20q4-2 8 0l-1 8q-4-2-8 0z" fill="#3d9be9" /><path d="M18 21q4 2 8-1l-1 8q-4 3-8 1z" fill="#fcc62c" />
      </svg>
    </button>
    <button class="app" aria-label="Internet Explorer">
      <svg viewBox="0 0 34 34">
        <path d="M27 24A10.500 10.500 0 1 1 28.500 17.500H9" fill="none" stroke="#35a8e6" stroke-width="5" />
        <path d="M5 32C-2 28 8 8 28 2q5-1 4 3" fill="none" stroke="#f2c52b" stroke-width="2.600" />
      </svg>
    </button>
    <button class="app open" aria-label="Windows Explorer">
      <svg viewBox="0 0 34 34">
        <path d="M2 5h9l2 3h18v22H2z" fill="#e8c765" stroke="#b89238" /><path d="M6 3h6v3H6z" fill="#45a045" /><path d="M14 4h6v3h-6z" fill="#d4503a" /><path d="M22 6h7v3h-7z" fill="#3f86c8" />
        <path d="M2 10h30v20H2z" fill="#f8e6a0" stroke="#d0ac50" /><path d="M7 33V21h20v12h-4v-7H11v7z" fill="#8fd0f0" stroke="#4a98c8" />
      </svg>
    </button>
    <button class="app" aria-label="Media Player">
      <svg viewBox="0 0 34 34">
        <path d="M12 5h18v24H12z" fill="#5aa8d4" /><path d="M9 5h17v25H9z" fill="#8cc8e8" stroke="#4a90bc" /><path d="M5 6h18v23H5z" fill="#c4e2f2" stroke="#6aa8c8" />
        <circle cx="14" cy="18" r="9" fill="#f07c1e" stroke="#c85a0c" /><path d="M11 12l9 6-9 6z" fill="#fff" />
      </svg>
    </button>
    <button class="app open" aria-label="Chrome">
      <svg viewBox="0 0 34 34">
        <path d="M17 17L3.140 9A16 16 0 0 1 30.860 9z" fill="#d9483b" />
        <path d="M17 17L30.860 9A16 16 0 0 1 17 33z" fill="#f8cb3c" /><path d="M17 17L17 33A16 16 0 0 1 3.140 9z" fill="#2ba24c" />
        <path d="M17 9h13.860l-5 10z" fill="#f8cb3c" /><path d="M3.140 9l7.300 12.500L17 17z" fill="#2ba24c" /><circle cx="17" cy="17" r="7.600" fill="#fff" /><circle cx="17" cy="17" r="6" fill="#4285f4" />
      </svg>
    </button>
    <button class="app" aria-label="Firefox">
      <svg viewBox="0 0 34 34">
        <circle cx="17" cy="17" r="14" fill="#f5701e" />
        <path d="M9 6q12-9 21 5l-4 8-9-2-6-4z" fill="#2f6fe0" /><circle cx="17" cy="17" r="8" fill="#3038a8" /><path d="M14 9q6-2 9 4-5-1-7 1z" fill="#36a4f0" />
        <path d="M4 6q1 4 6 3 4-2 7-1-3 2-3 5 3 0 4 2l-5 3q1 6 7 4 6-2 5-8-1-4-4-8 0-3 3-5 0 5 5 9 5 12-4 19-13 8-22-3Q0 17 4 6z" fill="#f5621e" />
        <path d="M24 1q1 5 4 8 8 12-2 20 5-9-1-17-3-5-1-11z" fill="#fdc02f" />
      </svg>
    </button>
    <button class="app open bright" aria-label="Coinexx">
      <svg viewBox="0 0 34 34"><path d="M27 6.500A13 14 0 1 0 27 27.500" fill="none" stroke="#ee8c2c" stroke-width="3.400" /></svg>
    </button>
    <button class="app open red" aria-label="WinRAR"><svg viewBox="0 0 48 47">{@render winrar()}</svg></button>
    <div class="tray">
      <svg viewBox="0 0 140 24" aria-hidden="true">
        <path d="M4 14h9l-4.500-4.500z" fill="#fff" />
        <path d="M26 4v16" stroke="#fff" stroke-width="1.500" /><path d="M27 5q4-2 7 0t6 0v8q-4 2-6 0t-7 0z" fill="#f4f4f4" /><circle cx="35" cy="15" r="5" fill="#e03030" stroke="#fff" stroke-width=".6" /><path d="M33 13l4 4M37 13l-4 4" stroke="#fff" stroke-width="1.400" />
        <path d="M50 6h8v13h-8z" fill="none" stroke="#eee" stroke-width="1.500" /><path d="M56 8h8v5q-4 4-8 0zM58 4v4M62 4v4M60 14v5" fill="#fff" stroke="#fff" stroke-width="1.300" /><rect x="50" y="11" width="8" height="8" fill="#b81414" /><path d="M51 12l6 6M57 12l-6 6" stroke="#300" stroke-width="1.300" />
        <path d="M74 17v2M77 15v4M80 12v7M83 9v10M86 6v13" stroke="#fff" stroke-width="2" />
        <path d="M101 10h3l5-5v15l-5-5h-3z" fill="#fff" />
        <circle cx="129" cy="12.500" r="8" fill="#f4df2a" /><path d="M121 13a8 8 0 0 1 11-8M137 13a8 8 0 0 1-11 7" fill="none" stroke="#3fa53a" stroke-width="2.200" /><path d="M129 8.500v8M125 12.500h8" stroke="#2f8f32" stroke-width="2.600" />
      </svg>
      <time><span>7:58 PM</span><span>3/13/2019</span></time>
    </div>
    <button class="peek" aria-label="Show desktop"></button>
  </footer>
</div>

<style>
  :global(body) { margin: 0; background: #0a4aa0; }
  .screen {
    display: flex;
    flex-direction: column;
    height: 100vh;
    overflow: hidden;
    font: 12px/16px "Open Sans", "Noto Sans", sans-serif;
    color: #111;
  }
  button { font: inherit; color: inherit; border: 0; padding: 0; background: none; }
  h1, h2 { margin: 0; font: inherit; }
  i { font-style: normal; }

  /* desktop */
  .desktop {
    position: relative;
    flex: 1;
    min-height: 0;
    display: flex;
    background: linear-gradient(90deg, #0b3f8c, #0a4ba6 30%, #0854b0 60%, #04499b 78%, #124a82);
  }
  .shortcuts { position: absolute; inset: 0; width: 100%; height: 60px; }
  .sc { position: absolute; left: 28px; top: 14px; font: bold 15px/20px "DejaVu Sans", sans-serif; color: #fff; }
  .gadget {
    position: absolute;
    right: 19px;
    top: 18px;
    width: 218px;
    height: 26px;
    padding: 8px 0 0 12px;
    display: flex;
    justify-content: space-between;
    border: 1px solid #2f6299;
    background: #0c3a70cc;
    color: #8fa9c4;
    font-size: 12px;
  }
  .gadget span { line-height: 18px; }
  .gadget i { margin-right: 14px; }
  .behind {
    position: absolute;
    left: 233px;
    right: 235px;
    top: 31px;
    height: 8px;
    border-top: 1px solid #0a2548;
    border-radius: 5px 5px 0 0;
    background: linear-gradient(#7f9dbd, #2a5a8c 20%, #163e6c);
  }
  .behind-left {
    position: absolute;
    left: 1px;
    top: 128px;
    bottom: 2px;
    width: 5px;
    border-radius: 4px 0 0 4px;
    background: linear-gradient(#2c5d98, #2f7fb4 60%, #1c5e92);
    box-shadow: inset 1px 0 #6f9cc8;
  }

  /* main window, runs past the right edge of the screen */
  .window {
    position: relative;
    flex: 1;
    min-width: 0;
    margin: 37px -20px 0 8px;
    display: flex;
    flex-direction: column;
    border-left: 1px solid #dfeaf6;
    border-top: 1px solid #d7e4f2;
    border-radius: 7px 0 0 0;
    box-shadow: 0 0 0 1px #0c2040;
    background: linear-gradient(#7ea3cb 60px, #5f8dbd 110px, #cfe2f6 130px, #a9c6e6 200px, #9dbde0);
  }
  .title {
    position: relative;
    height: 26px;
    display: flex;
    align-items: center;
    padding-left: 6px;
    border-bottom: 1px solid #29486c;
    border-radius: 6px 0 0 0;
    background:
      radial-gradient(ellipse 26px 12px at 112px 6px, #b8c07c88, transparent),
      radial-gradient(ellipse 34px 18px at 280px 12px, #aac6e6aa, transparent),
      radial-gradient(ellipse 26px 20px at 482px 8px, #9cc4d8aa, transparent),
      radial-gradient(ellipse 34px 20px at 588px 8px, #8fb9e6cc, transparent),
      radial-gradient(ellipse 20px 12px at 436px 8px, #52868088, transparent),
      radial-gradient(ellipse 160px 30px at 110px 14px, #aac6e6ee, #8fb2daaa 60%, transparent),
      linear-gradient(90deg, transparent 1034px, #17406e 1042px, #1a4674 1150px, #6c87a4 1270px),
      linear-gradient(#2c5f95 0, #33679e 60%, #a4c6ea 88%, #b4d2f0);
  }
  .logo { width: 14px; height: 16px; margin-right: 64px; }
  .title h1 { line-height: 26px; white-space: nowrap; }
  .scribble { position: absolute; left: 24px; top: 6px; width: 130px; height: 32px; z-index: 1; }
  .wbtns { display: flex; align-self: flex-start; margin: 0 6px 0 auto; border: 1px solid #d9e4ee; border-top: 0; border-radius: 0 0 5px 5px; overflow: hidden; }
  .wb { width: 28px; height: 18px; border-right: 1px solid #c5d2de; background: linear-gradient(#8c9db0, #5c7087 45%, #2d4664 50%, #667f99); display: grid; place-items: center; }
  .wb + .wb { width: 26px; }
  .wb svg { width: 12px; height: 12px; }
  .wb.close { width: 46px; border: 0; background: linear-gradient(#e09a8c, #cc5a44 45%, #b02812 50%, #d8603c); }

  .client {
    flex: 1;
    min-height: 0;
    display: flex;
    flex-direction: column;
    margin: 0 6px 0 4px;
    border-left: 1px solid #4c6d92;
    background: #f0f0f0;
  }
  .menu { display: flex; align-items: center; height: 21px; border-bottom: 1px solid #a0a0a0; }
  .menu > button { padding: 0 8px; }
  .mdi { width: 16px; height: 16px; margin: 0 0 0 4px; }
  .mdibtns { display: flex; gap: 1px; margin-left: auto; }
  .mdibtns button { box-sizing: border-box; width: 18px; height: 18px; border: 1px solid #9fb6cf; background: linear-gradient(#f4f9fd, #dbe8f5); }
  .mdibtns svg { width: 12px; height: 12px; }

  /* toolbars */
  .bar { display: flex; height: 26px; border-top: 1px solid #fff; }
  .grp { display: flex; align-items: center; gap: 4px; padding: 0 2px; border-right: 1px solid #a0a0a0; border-bottom: 1px solid #b0b0b0; }
  .grip { width: 3px; height: 18px; background: repeating-linear-gradient(#999 0 1px, transparent 1px 3px); }
  .sep { width: 1px; height: 20px; background: #a8a8a8; }
  .tool { box-sizing: border-box; width: 24px; height: 24px; display: flex; align-items: center; justify-content: center; flex: none; }
  .tool.drop { width: 34px; justify-content: space-between; padding-right: 5px; }
  .tool.wide { width: auto; gap: 2px; padding: 0 2px; white-space: nowrap; }
  .tool.pressed { border: 1px solid; border-color: #9a9a9a #fff #fff #9a9a9a; background: #f8f8f8; }
  .tool.tf { font: 10px/16px "DejaVu Sans Condensed", "DejaVu Sans", sans-serif; color: #444; }
  .tool.letter { font: bold 12px/16px "Liberation Sans", Arial, sans-serif; color: #555; }
  .ic { width: 18px; height: 18px; flex: none; }
  .caret { border: 3px solid transparent; border-top-color: #000; border-bottom: 0; }
  .right { display: flex; align-items: center; gap: 4px; margin-left: auto; padding-right: 8px; }

  .work { flex: 1; min-height: 0; display: flex; border-top: 1px solid #8c8c8c; }

  /* dock */
  .dock { width: 262px; flex: none; display: flex; flex-direction: column; gap: 3px; padding: 0 0 0 3px; box-sizing: border-box; }
  .panel { display: flex; flex-direction: column; border-right: 1px solid #bbb; }
  .watch { height: 300px; border-bottom: 1px solid #b4b4b4; }
  .nav { flex: 1; min-height: 0; }
  .cap { display: flex; align-items: center; justify-content: space-between; height: 15px; flex: none; padding: 0 3px 0 2px; background: linear-gradient(90deg, #bcd0e6, #dbe6f2 80%, #f0f0f0 95%); color: #51606e; }
  .cap h2 { font-size: 11px; line-height: 15px; }
  .cap button { font: bold 12px/14px "DejaVu Sans", sans-serif; color: #000; width: 10px; }
  .body { flex: 1; min-height: 0; display: flex; background: #fff; border-top: 1px solid #999; border-left: 1px solid #999; }
  .scroller { flex: 1; min-width: 0; overflow: hidden; }
  table { width: 100%; border-collapse: separate; border-spacing: 0; table-layout: fixed; }
  th { height: 23px; padding: 0 5px; font-weight: normal; text-align: left; border-bottom: 1px solid #bbb; border-right: 1px solid #ddd; background: linear-gradient(#fff 50%, #f3f4f6); }
  th:first-child { width: 90px; }
  td { height: 19px; padding: 0 3px 0 5px; border-bottom: 1px solid #bdbdbd; border-right: 1px solid #bdbdbd; color: #c0141c; line-height: 19px; }
  td:first-child { color: #111; white-space: nowrap; }
  th.num, td.num { text-align: right; }
  th:last-child, td:last-child { border-right: 0; padding-right: 5px; }
  td svg { width: 12px; height: 12px; margin-right: 3px; vertical-align: -2px; }
  tr.up td.num { color: #1010b8; }
  tr.dim td:first-child { color: #999; }
  tr.selected td:first-child, tr.selected.up td.num { background: #3397fd; color: #e8f4ff; }
  .sbar { width: 16px; display: flex; flex-direction: column; align-items: center; background: #f0f0f0; margin-right: 2px; }
  .arr { margin: 6px 0; border: 4px solid transparent; }
  .arr.up { border-bottom-color: #444; border-top: 0; }
  .arr.down { border-top-color: #444; border-bottom: 0; margin-top: auto; }
  .thumb { box-sizing: border-box; width: 15px; height: 27px; border: 1px solid #979797; border-radius: 2px; background: linear-gradient(90deg, #f4f4f4, #cfcfcf); display: grid; place-items: center; }
  .watch .thumb::after { content: ""; width: 7px; height: 9px; background: repeating-linear-gradient(#555 0 1px, transparent 1px 3px); }
  .nav .thumb { height: 16px; margin-top: 120px; }
  .tabs { display: flex; height: 22px; flex: none; border-top: 1px solid #000; padding-left: 2px; align-items: flex-start; background: #f0f0f0; }
  .tabs button { height: 18px; line-height: 16px; padding: 0 10px; color: #7a7a7a; border-right: 1px solid #666; }
  .tabs button.on { background: #fff; color: #111; border: 1px solid #000; border-top: 0; padding: 0 8px; height: 19px; }
  ul { margin: 0; padding: 1px 0 0; list-style: none; background: repeating-linear-gradient(#888 0 1px, transparent 1px 2px) 13px 0 / 1px 100% no-repeat, repeating-linear-gradient(#888 0 1px, transparent 1px 2px) 34px 0 / 1px 100% no-repeat; }
  li { display: flex; align-items: center; height: 18px; padding-left: 34px; font-size: 11px; white-space: nowrap; }
  li::before { content: ""; flex: none; width: 11px; height: 1px; margin-right: 2px; background: repeating-linear-gradient(90deg, #888 0 1px, transparent 1px 2px); }
  li svg { width: 16px; height: 16px; margin-right: 6px; flex: none; }
  .nav .body { border-bottom: 1px solid #000; margin-bottom: 4px; }

  /* chart */
  .chart { flex: 1; min-width: 0; margin-left: 2px; background: #000; border-left: 1px solid #777; }
  .chart svg { display: block; width: 100%; height: 100%; }
  text { font: 9px "DejaVu Sans Condensed", "DejaVu Sans", sans-serif; fill: #fff; }
  .ink { fill: #000; }
  .stamp { fill: #5a0000; }

  /* taskbar */
  .taskbar {
    position: relative;
    height: 39px;
    flex: none;
    display: flex;
    align-items: center;
    gap: 2px;
    border-top: 1px solid #3b5878;
    box-shadow: inset 0 1px #d0e2f4;
    background:
      radial-gradient(ellipse 40px 8px at 626px 34px, #6a8bb0aa, transparent),
      radial-gradient(ellipse 90px 6px at 580px 10px, #8aa8ca88, transparent),
      radial-gradient(ellipse 120px 6px at 780px 10px, #8aa8ca88, transparent),
      radial-gradient(ellipse 60px 6px at 960px 10px, #8aa8ca88, transparent),
      linear-gradient(90deg, #2f5880, #7ea2ca 50px, #a4c4ea 110px, #a9caf0 500px, #a6c8ee 1000px, #7f9cba 1060px, #6f8ca9);
  }
  .start { width: 57px; padding-left: 8px; box-sizing: border-box; flex: none; }
  .start svg { display: block; width: 38px; height: 38px; }
  .app { box-sizing: border-box; width: 60px; height: 38px; display: grid; place-items: center; flex: none; border-radius: 3px; }
  .app svg { width: 32px; height: 32px; }
  .app.open { border: 1px solid #5a7898; box-shadow: inset 0 0 0 1px #e6f0fa; background: linear-gradient(#d4e2f0, #b4cce6 50%, #a4c2e2); }
  .app.bright { background: linear-gradient(#f2f7fc, #d6e4f4); }
  .app.red { background: linear-gradient(90deg, #d8a8a8, #b07078 70%, #c89098); }
  .tray { margin-left: auto; display: flex; align-items: center; gap: 7px; color: #fff; }
  .tray svg { width: 140px; height: 24px; }
  time { display: flex; flex-direction: column; align-items: center; width: 62px; line-height: 17px; white-space: nowrap; }
  .peek { width: 15px; height: 38px; margin-left: 4px; border: 1px solid #d5e2ee; background: linear-gradient(135deg, #a9bccf, #5f7c9a); box-sizing: border-box; }
</style>
